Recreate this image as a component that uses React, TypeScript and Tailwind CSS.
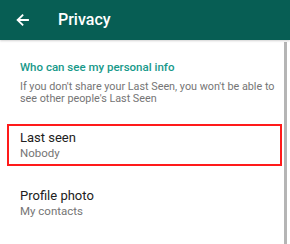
import React from "react";

export default function App() {
  return (
    <div className="w-[290px] h-[244px] bg-white overflow-hidden flex flex-col" style={{ fontFamily: "Roboto, 'Liberation Sans', sans-serif" }}>
      <div className="h-[40px] bg-[#075e54] flex items-center shrink-0 relative z-10 shadow-[0_1px_2px_rgba(0,0,0,0.18)]">
        <svg className="ml-[16px]" width="13" height="12" viewBox="0 0 13 12" fill="none" stroke="white" strokeWidth="1.8" strokeLinecap="square">
          <path d="M12 6H2M6.5 1.3L1.6 6l4.9 4.7" />
        </svg>
        <span className="ml-[29px] text-white text-[16px] font-medium leading-none">Privacy</span>
      </div>
      <div className="flex flex-1 min-h-0">
        <div className="flex-1 flex flex-col">
          <div className="pl-[20px] pt-[19px] text-[11.5px] font-medium leading-[16px] text-[#17998a]">Who can see my personal info</div>
          <div className="pl-[20px] pt-[6px] text-[10.8px] leading-[11.5px] text-[#757575]">
            If you don't share your Last Seen, you won't be able to<br />see other people's Last Seen
          </div>
          <div className="ml-[7px] mr-[2px] mt-[20px] h-[42px] border-2 border-[#ff1a1a] pl-[11px] flex flex-col justify-center">
            <div className="text-[13px] leading-[16px] text-[#212121]">Last seen</div>
            <div className="text-[11.5px] leading-[15px] text-[#757575]">Nobody</div>
          </div>
          <div className="pl-[20px] mt-[22px] flex flex-col">
            <div className="text-[13px] leading-[16px] text-[#212121]">Profile photo</div>
            <div className="text-[11.5px] leading-[15px] text-[#757575]">My contacts</div>
          </div>
        </div>
        <div className="w-[3px] mr-[3px] mt-[2px] bg-[#b5b5b5]" />
      </div>
    </div>
  );
}
